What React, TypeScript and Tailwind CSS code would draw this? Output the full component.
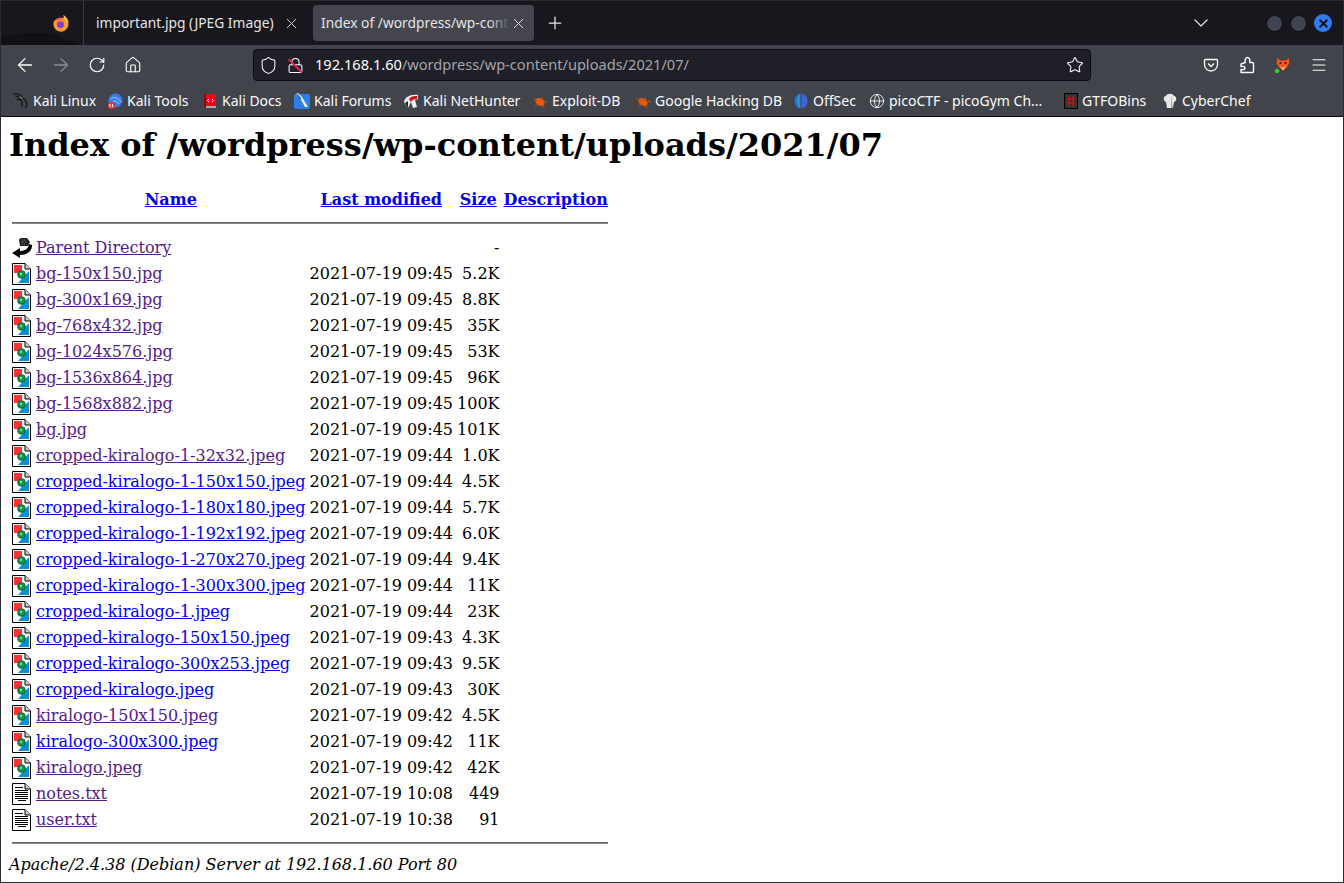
import { ArrowLeft, ArrowRight, ChevronDown, Home, Menu, Plus, RotateCw, Shield, Star, X, Globe, Lock } from "lucide-react";

const rows = [
  ["bg-150x150.jpg", "2021-07-19 09:45", "5.2K", "img", true],
  ["bg-300x169.jpg", "2021-07-19 09:45", "8.8K", "img", true],
  ["bg-768x432.jpg", "2021-07-19 09:45", "35K", "img", true],
  ["bg-1024x576.jpg", "2021-07-19 09:45", "53K", "img", true],
  ["bg-1536x864.jpg", "2021-07-19 09:45", "96K", "img", true],
  ["bg-1568x882.jpg", "2021-07-19 09:45", "100K", "img", true],
  ["bg.jpg", "2021-07-19 09:45", "101K", "img", true],
  ["cropped-kiralogo-1-32x32.jpeg", "2021-07-19 09:44", "1.0K", "img", true],
  ["cropped-kiralogo-1-150x150.jpeg", "2021-07-19 09:44", "4.5K", "img", false],
  ["cropped-kiralogo-1-180x180.jpeg", "2021-07-19 09:44", "5.7K", "img", false],
  ["cropped-kiralogo-1-192x192.jpeg", "2021-07-19 09:44", "6.0K", "img", false],
  ["cropped-kiralogo-1-270x270.jpeg", "2021-07-19 09:44", "9.4K", "img", false],
  ["cropped-kiralogo-1-300x300.jpeg", "2021-07-19 09:44", "11K", "img", false],
  ["cropped-kiralogo-1.jpeg", "2021-07-19 09:44", "23K", "img", false],
  ["cropped-kiralogo-150x150.jpeg", "2021-07-19 09:43", "4.3K", "img", false],
  ["cropped-kiralogo-300x253.jpeg", "2021-07-19 09:43", "9.5K", "img", false],
  ["cropped-kiralogo.jpeg", "2021-07-19 09:43", "30K", "img", false],
  ["kiralogo-150x150.jpeg", "2021-07-19 09:42", "4.5K", "img", true],
  ["kiralogo-300x300.jpeg", "2021-07-19 09:42", "11K", "img", false],
  ["kiralogo.jpeg", "2021-07-19 09:42", "42K", "img", true],
  ["notes.txt", "2021-07-19 10:08", "449", "txt", true],
  ["user.txt", "2021-07-19 10:38", "91", "txt", true],
] as const;

// apache listing icons
const ImageIcon = () => (
  <svg width="20" height="22" viewBox="0 0 20 22" className="block">
    <path d="M.5.5H13L18.500 6V21.500H.5Z" fill="#fff" stroke="#000" />
    <path d="M13 .5V6H18.500" fill="#ccc" stroke="#000" />
    <rect x="2" y="2" width="8" height="8" fill="#f33" />
    <path d="M17 8V20H6Z" fill="#0b8fd0" />
    <circle cx="9.500" cy="11.500" r="3.800" fill="#0a9a4a" stroke="#063" />
    <circle cx="9" cy="11" r="1.200" fill="#9c9" />
  </svg>
);

const TextIcon = () => (
  <svg width="20" height="22" viewBox="0 0 20 22" className="block">
    <path d="M.5.5H13L18.500 6V21.500H.5Z" fill="#fff" stroke="#000" />
    <path d="M13 .5V6H18.500" fill="#ccc" stroke="#000" />
    <path d="M3 4.500H11M3 7.500H16M3 9.500H16M3 11.500H16M3 13.500H16M3 15.500H16M6 17.500H14" stroke="#000" />
  </svg>
);

const BackIcon = () => (
  <svg width="20" height="20" viewBox="0 0 20 20" className="block">
    <path d="M7 1.500L9 0H15L18 4L16 8H8Z" fill="#222" />
    <path d="M10 2H14M9 4H15M10 6H14" stroke="#777" strokeDasharray="1 1" />
    <path d="M0 15L8 10V13C13 13 16 11 17 6L20 7C20.500 13 15 17 8 17V20Z" fill="#000" />
  </svg>
);

const Firefox = () => (
  <svg width="16" height="17" viewBox="0 0 16 17">
    <circle cx="7.500" cy="9.500" r="7" fill="#ff5e4d" />
    <path d="M1 6c-1 4 0 9 6 10.500 5 .5 8-3 8.500-7C15.500 6 14 3 10.500 0c1 3-1 4-3 5-3 0-5 0-6.500 1Z" fill="#ff9a2e" />
    <path d="M10.500 0c3 2 5 5 5 8-1-2-2-3-3.500-4-.5-1.500-1.500-2.500-1.500-4Z" fill="#ffd43b" />
    <circle cx="7.500" cy="9.500" r="3.500" fill="#7542e5" />
    <path d="M3 7.500c2-2 6-2 8 0-2-.5-6-.5-8 0Z" fill="#ff4f5e" />
  </svg>
);

const KaliDragon = () => (
  <svg width="16" height="16" viewBox="0 0 16 16" fill="none" stroke="#0c0c0c" strokeWidth="1.100">
    <path d="M0 1C5 0 8 2 10 5C12 7 14 9 14 12C14 14 12 14 12 15" />
    <path d="M2 3C5 3 7 5 8 7C6 7 5 7 4 6M8 7C9 9 10 11 9 14" />
    <path d="M10 5C8 5 7 4 6 4" stroke="#bbb" strokeWidth=".6" />
  </svg>
);

const KaliTools = () => (
  <svg width="16" height="16" viewBox="0 0 16 16">
    <circle cx="8.500" cy="7.500" r="7" fill="#367bf0" />
    <path d="M4 6C7 3 11 5 14 9M6 9C8 7 10 8 12 11" stroke="#bcd" fill="none" />
    <rect x="1" y="9" width="7" height="7" rx="3" fill="#e53935" />
    <path d="M3 11V14M5.500 11V14" stroke="#fff" />
  </svg>
);

const KaliDocs = () => (
  <svg width="16" height="16" viewBox="0 0 16 16">
    <rect x="2" y="1" width="12" height="14" fill="#d3141c" />
    <rect x="2" y="13" width="12" height="2" fill="#aab" />
    <rect x="2" y="1" width="2" height="14" fill="#7a0f14" />
    <path d="M7 6L5.500 7.500L7 9M10 6L11.500 7.500L10 9" stroke="#fff" fill="none" />
  </svg>
);

const KaliForums = () => (
  <svg width="16" height="16" viewBox="0 0 16 16">
    <rect x="0" y="1" width="16" height="15" rx="2" fill="#2a7fe8" />
    <path d="M2 1L6 5L11 14L14 14L8 4L4 0Z" fill="#eef" />
    <path d="M3 1L7 6" stroke="#223" />
  </svg>
);

const KaliNet = () => (
  <svg width="16" height="16" viewBox="0 0 16 16">
    <path d="M1 9C2 4 7 1 15 2L15 6L12 7L14 14L10 15L8 9L5 15Z" fill="#eee" />
    <path d="M6 6C8 3 11 3 14 3L14 6C11 6 9 7 8 9Z" fill="#d3141c" />
    <path d="M2 10L5 8L5 15Z" fill="#222" />
  </svg>
);

const Bug = () => (
  <svg width="16" height="16" viewBox="0 0 16 16">
    <ellipse cx="8" cy="9" rx="5" ry="3.500" fill="#e8590c" transform="rotate(30 8 9)" />
    <path d="M1 5L6 8M3 13L7 11M10 13L13 15M10 4L11 7M13 8L16 9" stroke="#c2500f" />
  </svg>
);

const OffSec = () => (
  <svg width="16" height="16" viewBox="0 0 16 16">
    <ellipse cx="8" cy="8" rx="6.500" ry="7.500" fill="#2f6fd8" />
    <path d="M8 .5C3 2 3 14 8 15.500C6 11 6 5 8 .5Z" fill="#19a2c9" />
    <path d="M9 .5C13 2 13 14 9 15.500C11 11 11 5 9 .5Z" fill="#7a3fe0" />
    <path d="M8 0V16" stroke="#42444b" />
  </svg>
);

const Gtfo = () => (
  <svg width="16" height="16" viewBox="0 0 16 16">
    <rect x="2.500" y=".5" width="13" height="15" fill="#333" stroke="#000" />
    <path d="M7 3V13M11 3V13M4.500 6H13.500M4.500 10H13.500" stroke="#c1121f" strokeWidth="1.600" />
  </svg>
);

const Chef = () => (
  <svg width="16" height="16" viewBox="0 0 16 16">
    <path d="M5 15L4 9C1 8 1 3 4 3C5 0 11 0 12 3C15 3 15 8 12 9L11 15Z" fill="#e6e6e6" />
    <path d="M9 3L11 15H9Z" fill="#aaa" />
  </svg>
);

const Pocket = () => (
  <svg width="16" height="16" viewBox="0 0 16 16" fill="none" stroke="#fbfbfe" strokeWidth="1.300">
    <path d="M2.500 2.500H13.500A1 1 0 0 1 14.500 3.500V7.500A6.500 6.500 0 0 1 1.500 7.500V3.500A1 1 0 0 1 2.500 2.500Z" />
    <path d="M5 6.500L8 9.500L11 6.500" />
  </svg>
);

const Extension = () => (
  <svg width="16" height="18" viewBox="0 0 16 18" fill="none" stroke="#fbfbfe" strokeWidth="1.400" strokeLinejoin="round">
    <path d="M2 16.500H13.500A1 1 0 0 0 14.500 15.500V7.500A1 1 0 0 0 13.500 6.500H10.700C11.500 3.500 10 1.500 8.500 1.500C7 1.500 5.500 3.500 6.300 6.500L2 8V10.500C5 10 6 11 6 12C6 13 5 14 2 13.500Z" />
  </svg>
);

const Fox = () => (
  <svg width="18" height="20" viewBox="0 0 18 20">
    <path d="M3 2L6 5H12L15 2L16 8L13 13L9 16L5 13L2 8Z" fill="#e8562a" stroke="#3a2a22" strokeWidth=".6" />
    <path d="M6 11L9 12.500L12 11L9 16Z" fill="#f3a77e" />
    <circle cx="6.500" cy="8" r="1" fill="#222" />
    <circle cx="11.500" cy="8" r="1" fill="#222" />
    <circle cx="3" cy="16" r="2.200" fill="#19e019" />
  </svg>
);

const bookmarks = [
  { icon: <KaliDragon />, label: "Kali Linux", w: "w-[94px]" },
  { icon: <KaliTools />, label: "Kali Tools", w: "w-[95px]" },
  { icon: <KaliDocs />, label: "Kali Docs", w: "w-[92px]" },
  { icon: <KaliForums />, label: "Kali Forums", w: "w-[109px]" },
  { icon: <KaliNet />, label: "Kali NetHunter", w: "w-[129px]" },
  { icon: <Bug />, label: "Exploit-DB", w: "w-[103px]" },
  { icon: <Bug />, label: "Google Hacking DB", w: "w-[158px]" },
  { icon: <OffSec />, label: "OffSec", w: "w-[76px]" },
  { icon: <Globe size={16} strokeWidth={1.3} color="#fbfbfe" />, label: "picoCTF - picoGym Ch...", w: "w-[193px]" },
  { icon: <Gtfo />, label: "GTFOBins", w: "w-[100px]" },
  { icon: <Chef />, label: "CyberChef", w: "w-[100px]" },
];

const visited = "text-[#551a8b] underline";
const unvisited = "text-[#0000ee] underline";

export default function App() {
  return (
    <div className="flex flex-col w-[1344px] h-[883px] overflow-hidden bg-white border border-[#2b2a33] font-['Noto_Sans',sans-serif]">
      {/* tab strip */}
      <div className="flex items-center h-[44px] shrink-0 bg-[#17171d] text-[#e4e4e8] text-[13.8px]">
        <div className="relative flex items-center justify-end w-[83px] h-full pr-[14px] border-r border-[#3a3a42]">
          {/* wallpaper showing through the theme */}
          <svg width="82" height="44" viewBox="0 0 82 44" className="absolute left-0 top-0">
            <path d="M0 44V36C20 32 40 31 55 34L80 44Z" fill="#101015" />
          </svg>
          <div className="relative"><Firefox /></div>
        </div>
        <div className="flex items-center w-[229px] h-[36px] pl-[12px] pr-[13px]">
          <span className="flex-1 whitespace-nowrap">important.jpg (JPEG Image)</span>
          <X size={17} strokeWidth={1.3} />
        </div>
        <div className="relative flex items-center w-[221px] h-[36px] pl-[8px] pr-[7px] rounded-[4px] bg-[#45464d]">
          <span className="relative flex-1 whitespace-nowrap overflow-hidden">
            Index of /wordpress/wp-cont
            <span className="absolute right-0 top-0 bottom-0 w-[22px] bg-gradient-to-l from-[#45464d] to-transparent" />
          </span>
          <X size={17} strokeWidth={1.3} />
        </div>
        <Plus size={20} strokeWidth={1.5} className="ml-[11px]" />
        <div className="flex-1" />
        <ChevronDown size={24} strokeWidth={1.2} className="mr-[53px]" />
        <div className="flex items-center gap-[7px] mr-[11px]">
          <div className="w-[17px] h-[17px] rounded-full bg-[#3e4452] border border-[#0c0c0c]" />
          <div className="w-[17px] h-[17px] rounded-full bg-[#3e4452] border border-[#0c0c0c]" />
          <div className="flex items-center justify-center w-[18px] h-[18px] rounded-full bg-[#2f7bf2]">
            <X size={13} strokeWidth={3.5} color="#10131a" />
          </div>
        </div>
      </div>

      {/* toolbar */}
      <div className="flex items-center h-[40px] shrink-0 pl-[6px] bg-[#42444b] text-[#fbfbfe]">
        <div className="flex items-center justify-center w-[36px]"><ArrowLeft size={22} strokeWidth={1.4} /></div>
        <div className="flex items-center justify-center w-[36px]"><ArrowRight size={22} strokeWidth={1.4} className="opacity-40" /></div>
        <div className="flex items-center justify-center w-[36px]"><RotateCw size={18} strokeWidth={1.6} /></div>
        <div className="flex items-center justify-center w-[36px]"><Home size={18} strokeWidth={1.5} className="mr-[1px]" /></div>
        <div className="flex items-center w-[838px] h-[32px] ml-[102px] rounded-[4px] bg-[#1e1f27] border border-[#0e0e12] text-[14.6px]">
          <Shield size={19} strokeWidth={1.3} className="ml-[5px]" />
          <div className="relative ml-[9px]">
            <Lock size={17} strokeWidth={1.5} />
            <div className="absolute left-[-1px] top-[8px] w-[19px] h-[1.5px] bg-[#e22850] rotate-45" />
          </div>
          <span className="ml-[11px] whitespace-nowrap">
            192.168.1.60<span className="text-[#a4a5aa]">/wordpress/wp-content/uploads/2021/07/</span>
          </span>
          <div className="flex-1" />
          <Star size={18} strokeWidth={1.4} className="mr-[6px]" />
        </div>
        <div className="flex items-center ml-[102px]">
          <div className="flex items-center justify-center w-[36px]"><Pocket /></div>
          <div className="flex items-center justify-center w-[36px]"><Extension /></div>
          <div className="flex items-center justify-center w-[36px]"><Fox /></div>
          <div className="flex items-center justify-center w-[36px]"><Menu size={18} strokeWidth={1.4} className="mr-[1px]" /></div>
        </div>
      </div>

      {/* bookmarks */}
      <div className="flex items-center h-[32px] shrink-0 pl-[12px] bg-[#42444b] border-b border-[#0c0c0c] text-[#fbfbfe] text-[14px]">
        {bookmarks.map((b) => (
          <div key={b.label} className={`flex items-center gap-[4px] shrink-0 whitespace-nowrap ${b.w}`}>
            {b.icon}
            <span>{b.label}</span>
          </div>
        ))}
      </div>

      {/* listing */}
      <div className="flex-1 px-[8px] bg-white text-black font-['DejaVu_Serif',serif] text-[16px]">
        <h1 className="mt-[10px] mb-[22px] text-[32px] leading-[37px] font-bold whitespace-nowrap">Index of /wordpress/wp-content/uploads/2021/07</h1>
        <table className="border-separate border-spacing-[2px] leading-[22px]">
          <tbody>
            <tr className="font-bold text-center">
              <th className="p-[1px] w-[20px]"></th>
              <th className="p-[1px]"><span className={unvisited}>Name</span></th>
              <th className="p-[1px]"><span className={unvisited}>Last modified</span></th>
              <th className="p-[1px]"><span className={unvisited}>Size</span></th>
              <th className="p-[1px]"><span className={unvisited}>Description</span></th>
            </tr>
            <tr>
              <th colSpan={5} className="p-[1px] h-[20px]"><div className="h-[2px] mb-[2px] bg-[#666] border-b border-[#888]" /></th>
            </tr>
            <tr>
              <td className="p-[1px]"><BackIcon /></td>
              <td className="p-[1px]"><span className={visited}>Parent Directory</span></td>
              <td className="p-[1px]"></td>
              <td className="p-[1px] text-right">-</td>
              <td className="p-[1px]"></td>
            </tr>
            {rows.map(([name, date, size, kind, seen]) => (
              <tr key={name}>
                <td className="p-[1px]">{kind === "img" ? <ImageIcon /> : <TextIcon />}</td>
                <td className="p-[1px] whitespace-nowrap"><span className={seen ? visited : unvisited}>{name}</span></td>
                <td className="p-[1px] text-right whitespace-nowrap">{date}</td>
                <td className="p-[1px] text-right whitespace-nowrap">{size}</td>
                <td className="p-[1px]"></td>
              </tr>
            ))}
            <tr>
              <th colSpan={5} className="p-[1px] h-[19px]"><div className="h-[2px] mb-[2px] bg-[#666] border-b border-[#888]" /></th>
            </tr>
          </tbody>
        </table>
        <div className="italic leading-[19px]">Apache/2.4.38 (Debian) Server at 192.168.1.60 Port 80</div>
      </div>
    </div>
  );
}
